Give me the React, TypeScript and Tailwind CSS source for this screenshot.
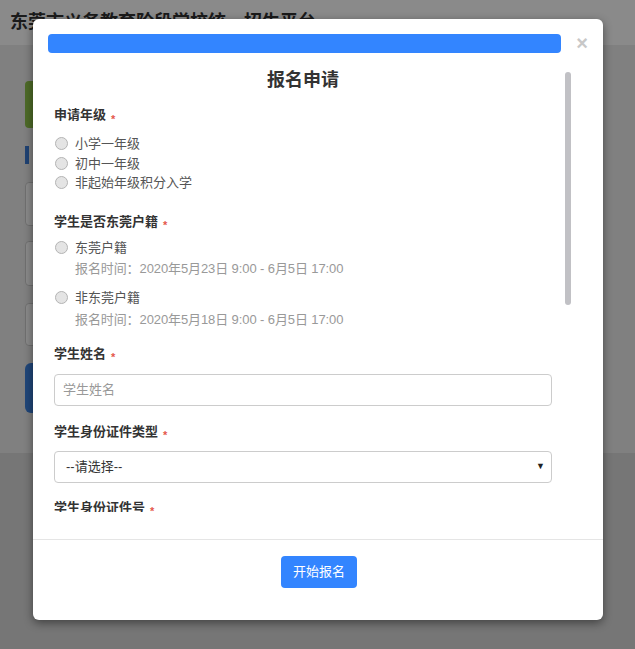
import React from 'react'

const font = { fontFamily: '"Liberation Sans", "Noto Sans CJK SC", sans-serif' }

function Star() {
  return <span className="ml-[5px] text-[11px] leading-none text-[#e4574c] relative top-[4px]">*</span>
}

function Label({ children, className = '' }: { children: React.ReactNode; className?: string }) {
  return (
    <div className={`flex items-center text-[13px] leading-[20px] font-bold text-[#333] ${className}`}>
      {children}
      <Star />
    </div>
  )
}

function Radio({ text, sub, className = '' }: { text: string; sub?: string; className?: string }) {
  return (
    <div className={className}>
      <label className="flex items-center h-[19.5px] text-[13px] text-[#555]">
        <span className="w-[13px] h-[13px] rounded-full border border-[#b4b4b4] bg-[#e4e4e4] shrink-0" />
        <span className="ml-[7px] leading-[19.5px]">{text}</span>
      </label>
      {sub && <div className="mt-[2px] pl-[20px] text-[13px] leading-[20px] text-[#999] tracking-[-0.1px]">{sub}</div>}
    </div>
  )
}

export default function App() {
  return (
    <div className="relative min-h-screen h-[649px] overflow-hidden bg-[#dadada]" style={font}>
      {/* page behind */}
      <div className="h-[45px] bg-white shadow-[0_1px_3px_rgba(0,0,0,0.15)] px-[10px] flex items-center">
        <h1 className="text-[18px] font-bold text-[#333]">东莞市义务教育阶段学校统一招生平台</h1>
      </div>
      <div className="h-[408px] bg-[#ededed] px-[25px] pt-[36px]">
        <div className="h-[47px] w-[300px] rounded-[4px] bg-[#8fc54a]" />
        <div className="mt-[18px] h-[18px] w-[4px] bg-[#3a7bd5]" />
        <div className="mt-[18px] h-[44px] w-[300px] rounded-[4px] border border-[#d0d0d0] bg-white" />
        <div className="mt-[15px] h-[45px] w-[300px] rounded-[4px] border border-[#d0d0d0] bg-white" />
        <div className="mt-[17px] h-[43px] w-[300px] rounded-[4px] border border-[#d0d0d0] bg-white" />
        <div className="mt-[17px] h-[50px] w-[300px] rounded-[6px] bg-[#3b82e0]" />
      </div>

      {/* overlay */}
      <div className="absolute inset-0 bg-black/[0.46]">
        <div className="ml-[33px] mt-[19px] w-[570px] h-[601px] bg-white rounded-[6px] shadow-[0_3px_10px_rgba(0,0,0,0.45)] flex flex-col">
          <div className="flex items-center pt-[15px] pl-[15px] pr-[7px]">
            <div className="flex-1 h-[19px] rounded-[4px] bg-[#3385ff]" />
            <button className="w-[28px] ml-[7px] text-[20px] leading-[19px] font-bold text-[#c8c8c8] text-center">×</button>
          </div>

          <div className="flex-1 min-h-0 flex flex-col pt-[7px] pb-[27px]">
            <div className="relative flex-1 min-h-0 overflow-hidden">
              <div className="pl-[21px] pr-[51px]">
                <h2 className="mt-[10px] text-center text-[18px] leading-[20px] font-bold text-[#333]">报名申请</h2>

                <Label className="mt-[15px]">申请年级</Label>
                <div className="mt-[9px] pl-[1px]">
                  <Radio text="小学一年级" />
                  <Radio text="初中一年级" />
                  <Radio text="非起始年级积分入学" />
                </div>

                <Label className="mt-[19px]">学生是否东莞户籍</Label>
                <div className="pl-[1px]">
                  <Radio className="mt-[6px]" text="东莞户籍" sub="报名时间：2020年5月23日 9:00 - 6月5日 17:00" />
                  <Radio className="mt-[9px]" text="非东莞户籍" sub="报名时间：2020年5月18日 9:00 - 6月5日 17:00" />
                </div>

                <Label className="mt-[14px]">学生姓名</Label>
                <input
                  placeholder="学生姓名"
                  className="mt-[10px] block w-full h-[32px] rounded-[4px] border border-[#ccc] px-[8px] text-[13px] text-[#333] placeholder:text-[#999] outline-none"
                />

                <Label className="mt-[16px]">学生身份证件类型</Label>
                <div className="mt-[9px] flex items-center justify-between h-[32px] rounded-[4px] border border-[#ccc] pl-[11px] pr-[6px] text-[13px] text-[#333]">
                  <span>--请选择--</span>
                  <span className="text-[9px] text-[#222]">▼</span>
                </div>

                <Label className="mt-[15px]">学生身份证件号</Label>
                <input
                  placeholder="学生身份证件号"
                  className="mt-[10px] block w-full h-[32px] rounded-[4px] border border-[#ccc] px-[8px] text-[13px] outline-none"
                />
              </div>
              <div className="absolute right-[32px] top-[12px] w-[6px] h-[233px] rounded-full bg-[#c1c1c5]" />
            </div>
          </div>

          <div className="border-t border-[#e5e5e5] h-[81px] pt-[16px] flex justify-center">
            <button className="ml-[2px] h-[32px] px-[12px] rounded-[4px] bg-[#3385ff] text-white text-[13px]">开始报名</button>
          </div>
        </div>
      </div>
    </div>
  )
}
